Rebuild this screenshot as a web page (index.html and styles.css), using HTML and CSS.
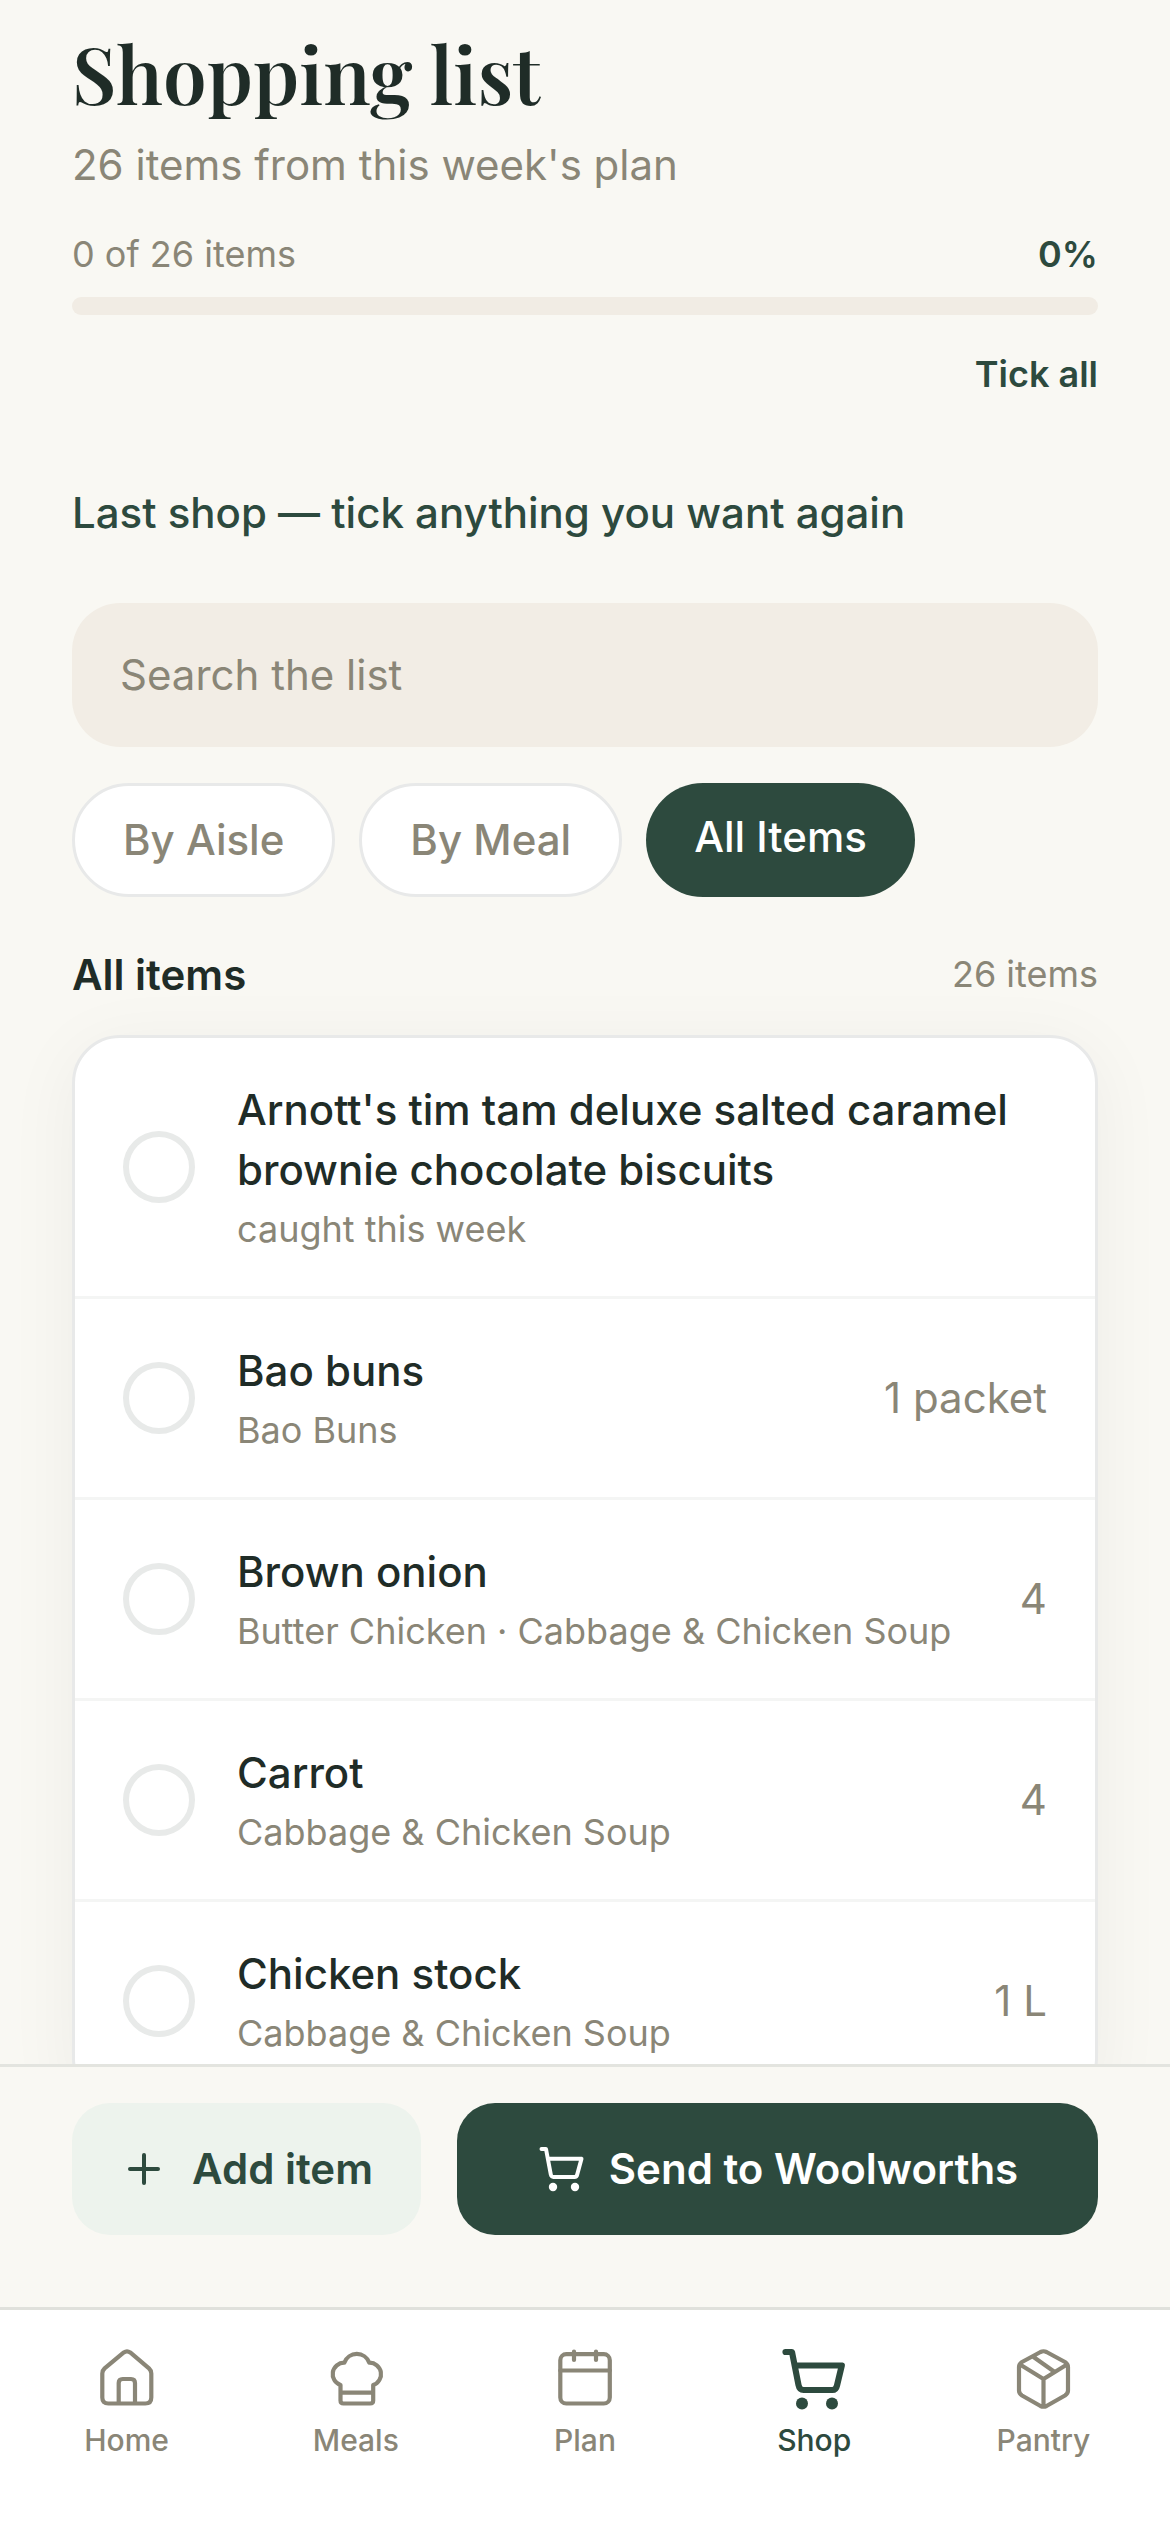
FILE: index.html
```html
<!DOCTYPE html>
<html lang="en">
<head>
<meta charset="utf-8">
<title>Shopping list</title>
<link rel="stylesheet" href="styles.css">
</head>
<body>
<div class="app">
  <main class="content">
    <h1 class="title">Shopping list</h1>
    <p class="subtitle">26 items from this week's plan</p>
    <div class="progress-row"><span>0 of 26 items</span><span class="percent">0%</span></div>
    <div class="track"></div>
    <a class="tick-all">Tick all</a>
    <p class="last-shop">Last shop — tick anything you want again</p>
    <div class="search">Search the list</div>
    <div class="chips">
      <span class="chip">By Aisle</span>
      <span class="chip">By Meal</span>
      <span class="chip chip-active">All Items</span>
    </div>
    <div class="section-head"><h2 class="section-title">All items</h2><span class="count">26 items</span></div>
    <ul class="list">
      <li class="row"><span class="check"></span><div class="text"><div class="name">Arnott's tim tam deluxe salted caramel brownie chocolate biscuits</div><div class="meta">caught this week</div></div></li>
      <li class="row"><span class="check"></span><div class="text"><div class="name">Bao buns</div><div class="meta">Bao Buns</div></div><span class="qty">1 packet</span></li>
      <li class="row"><span class="check"></span><div class="text"><div class="name">Brown onion</div><div class="meta">Butter Chicken · Cabbage &amp; Chicken Soup</div></div><span class="qty">4</span></li>
      <li class="row"><span class="check"></span><div class="text"><div class="name">Carrot</div><div class="meta">Cabbage &amp; Chicken Soup</div></div><span class="qty">4</span></li>
      <li class="row"><span class="check"></span><div class="text"><div class="name">Chicken stock</div><div class="meta">Cabbage &amp; Chicken Soup</div></div><span class="qty">1 L</span></li>
    </ul>
  </main>
  <div class="actions">
    <button class="btn btn-add"><svg class="btn-icon" viewBox="0 0 48 48"><path d="M24 10v28M10 24h28"/></svg>Add item</button>
    <button class="btn btn-send"><svg class="btn-icon" viewBox="0 0 48 48"><path d="M4.500 4H9L13.800 29.500Q14.300 32 16.500 32H37.500Q39.700 32 40.200 29.500L44.500 13.800H11"/><circle class="dot" cx="16" cy="42" r="4.200"/><circle class="dot" cx="38" cy="42" r="4.200"/></svg>Send to Woolworths</button>
  </div>
  <nav class="nav">
    <a class="tab"><svg class="tab-icon" viewBox="0 0 72 72"><path d="M11.300 30.500Q11.300 27.500 13.600 25.400L32.800 9.400Q36 7.200 39.200 9.400L58 25.400Q60.300 27.500 60.300 30.500V54.500Q60.300 60.500 54.300 60.500H17.300Q11.300 60.500 11.300 54.500ZM27.700 60V40Q27.700 36 31.700 36H40Q44 36 44 40V60"/></svg>Home</a>
    <a class="tab"><svg class="tab-icon" viewBox="0 0 72 72"><path d="M20.500 42A11.450 11.450 0 0 1 24.300 19.700A13.300 13.300 0 0 1 49.300 19.700A11.450 11.450 0 0 1 53.200 42V57.500Q53.200 60.500 50.200 60.500H23.500Q20.500 60.500 20.500 57.500ZM20.500 49.700H53"/></svg>Meals</a>
    <a class="tab"><svg class="tab-icon" viewBox="0 0 72 72"><rect x="11.300" y="11.200" width="49.500" height="49.300" rx="6"/><path d="M11.300 27.500h49.500M25 8.500v8.500M47 8.500v8.500"/></svg>Plan</a>
    <a class="tab tab-active"><svg class="tab-icon" viewBox="0 0 72 72"><path d="M7.500 9H14L20.500 42Q21.500 47 25.500 47H54.500Q58 47 59 42.500L63.800 22.500H17.500"/><circle class="dot" cx="24" cy="60.500" r="6"/><circle class="dot" cx="54" cy="60.500" r="6"/></svg>Shop</a>
    <a class="tab"><svg class="tab-icon" viewBox="0 0 72 72"><path d="M33.500 9Q36.500 7.500 39.500 9L58 19Q61 21 61 24V47.500Q61 50.500 58 52.500L39.500 63Q36.500 64.500 33.500 63L15 52.500Q12 50.500 12 47.500V24Q12 21 15 19ZM13 21.500L36.500 36L60 21.500M36.500 36V63.500M26.500 14L47 28.500"/></svg>Pantry</a>
  </nav>
</div>
</body>
</html>
```
FILE: styles.css
```css
* { box-sizing: border-box; }
body { margin: 0; background: #f9f8f3; font-family: Inter, sans-serif; font-size: 42px; line-height: 60px; color: #1f2c27; }
h1, h2, p, ul { margin: 0; padding: 0; }
.app { display: flex; flex-direction: column; height: 2532px; overflow: hidden; }
.content { flex: 1; min-height: 0; overflow: hidden; padding: 25px 72px 0; }
.title { font-family: "Playfair Display", "Liberation Serif", serif; font-size: 78px; line-height: 96px; font-weight: 600; }
.subtitle { margin-top: 14px; color: #8a8677; }
.progress-row { display: flex; justify-content: space-between; margin-top: 35px; font-size: 36px; line-height: 48px; color: #8a8677; }
.percent { font-weight: 600; color: #2d4a3e; }
.track { margin-top: 19px; height: 18px; border-radius: 9px; background: #f1ece4; }
.tick-all { display: block; margin-top: 35px; text-align: right; font-size: 36px; line-height: 48px; font-weight: 600; color: #2d4a3e; }
.last-shop { margin-top: 85px; font-weight: 500; color: #2d4a3e; }
.search { margin-top: 60px; height: 144px; padding: 42px 48px; border-radius: 48px; background: #f2ede5; color: #8a8677; }
.chips { display: flex; gap: 24px; margin-top: 36px; }
.chip { padding: 24px 48px; border: 3px solid #e8e9e9; border-radius: 57px; background: #fff; color: #8a8677; font-weight: 500; }
.chip-active { border: 0; background: #2d4a3e; color: #fff; }
.section-head { display: flex; justify-content: space-between; align-items: center; margin-top: 48px; }
.section-title { font-size: 42px; font-weight: 600; }
.count { padding-bottom: 2px; font-size: 36px; line-height: 48px; color: #8a8677; }
.list { list-style: none; margin-top: 30px; border: 3px solid #e8e9e9; border-radius: 48px; background: #fff; box-shadow: 0 12px 72px rgba(31, 44, 39, .05); }
.row { display: flex; align-items: center; gap: 42px; padding: 42px 48px; border-bottom: 3px solid #f4f5f4; }
.check { flex: none; width: 72px; height: 72px; border: 6px solid #e8eae9; border-radius: 50%; }
.text { flex: 1; }
.name { font-weight: 500; }
.meta { margin-top: 5px; padding-bottom: 1px; font-size: 36px; line-height: 48px; color: #8a8677; }
.qty { flex: none; color: #8a8677; }
.actions { position: relative; flex: none; display: flex; gap: 36px; height: 243px; padding: 36px 72px; border-top: 3px solid #e3e4df; background: #f9f8f3; }
.btn { display: flex; align-items: center; justify-content: center; gap: 24px; height: 132px; padding: 0 48px; border: 0; border-radius: 38px; font: 600 42px/60px Inter, sans-serif; }
.btn-add { background: #edf3ed; color: #2d4a3e; }
.btn-send { flex: 1; background: #2d4a3e; color: #fff; }
.btn-icon { width: 48px; height: 48px; flex: none; }
svg { fill: none; stroke: currentColor; stroke-width: 4; stroke-linecap: round; stroke-linejoin: round; }
.dot { fill: currentColor; stroke: none; }
.nav { position: relative; flex: none; display: flex; height: 225px; padding: 33px 12px 0; border-top: 3px solid #e0e1dc; background: #fff; }
.tab { flex: 1; display: flex; flex-direction: column; align-items: center; gap: 4px; font-size: 30px; line-height: 42px; font-weight: 500; color: #8a8677; }
.tab-icon { width: 72px; height: 72px; stroke-width: 4.200; }
.tab-active { color: #2d4a3e; }
.tab-active .tab-icon { stroke-width: 6.200; }
```
